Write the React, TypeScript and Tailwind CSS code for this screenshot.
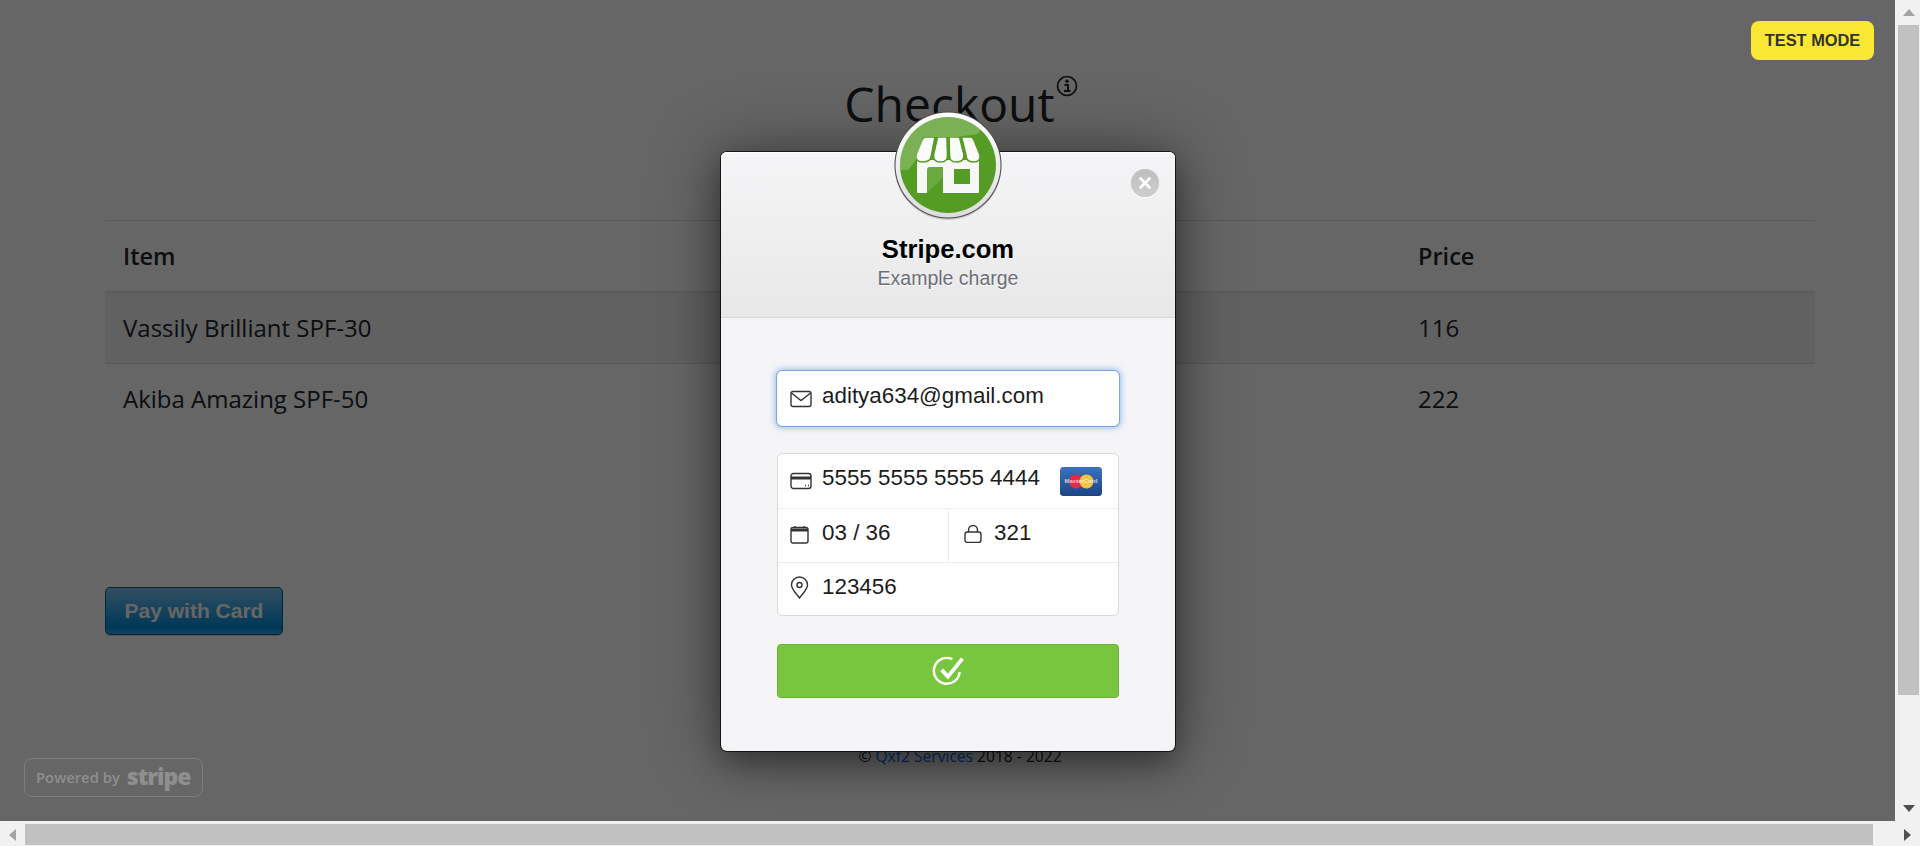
import React from "react";

const ic = "shrink-0 fill-none stroke-[#333] stroke-[1.4]";

function StoreLogo() {
  const awn = [
    "M33 27 Q30 27 29 30 L23 45 Q22 52 30 52 Q38 52 38.5 45 L42 27 Z",
    "M44.5 27 L40.5 45 Q40 52 47.5 52 Q55 52 54.5 45 L54 27 Z",
    "M56 27 L56.5 45 Q56 52 63.5 52 Q71 52 71 45 L66.5 27 Z",
    "M68.5 27 L73 45 Q73 52 80.5 52 Q88 52 87 45 L81 30 Q80 27 77 27 Z",
  ];
  return (
    <svg width="110" height="110" viewBox="0 0 110 110" className="block">
      <defs>
        <clipPath id="logoClip">
          <circle cx="55" cy="55" r="48" />
        </clipPath>
        <linearGradient id="ringG" x1="0" y1="0" x2="0" y2="1">
          <stop offset="0" stopColor="#ffffff" />
          <stop offset="1" stopColor="#dcdcdc" />
        </linearGradient>
      </defs>
      <circle cx="55" cy="56.5" r="53.5" fill="#000" opacity="0.15" />
      <circle cx="55" cy="55" r="53.5" fill="#4a4a4a" />
      <circle cx="55" cy="55" r="52.5" fill="url(#ringG)" />
      <circle cx="55" cy="55" r="48" fill="#549c24" />
      <rect x="24" y="50" width="62" height="33" rx="1" fill="#f7f7f7" />
      {awn.map((d) => (
        <path key={d} d={d} fill="#fbfbfb" stroke="#549c24" strokeWidth="1.6" />
      ))}
      <path d="M34 83 V60 Q34 57 37 57 H50 V83 Z" fill="#549c24" />
      <rect x="61" y="59" width="16" height="15" fill="#549c24" />
      <g clipPath="url(#logoClip)">
        <path d="M34 83 L50 68 V57 H37 Q34 57 34 60 Z" fill="#fff" opacity="0.13" />
        <path d="M90 0 L84 24 L64 27 H30 L26 46 L15 60 L0 60 V0 Z" fill="#fff" opacity="0.22" />
        <path d="M84 24 L110 0 H88 Z" fill="#fff" opacity="0.22" />
      </g>
    </svg>
  );
}

function MasterCard() {
  return (
    <svg width="42" height="29" viewBox="0 0 42 29" className="block shrink-0">
      <defs>
        <linearGradient id="mcG" x1="0" y1="0" x2="0" y2="1">
          <stop offset="0" stopColor="#3a73bd" />
          <stop offset="1" stopColor="#1a4485" />
        </linearGradient>
      </defs>
      <rect x="0" y="0" width="42" height="29" rx="3.5" fill="url(#mcG)" />
      <circle cx="16" cy="14.5" r="7" fill="#e8264a" />
      <circle cx="26.5" cy="14.5" r="7" fill="#f5c242" />
      <text x="21" y="16.2" textAnchor="middle" fontSize="6" fontWeight="700" fill="#ffffff" opacity="0.7" fontFamily="Liberation Sans, sans-serif">
        MasterCard
      </text>
    </svg>
  );
}

export default function App() {
  return (
    <div className="flex h-screen w-screen flex-col overflow-hidden bg-white font-['Liberation_Sans',Arial,sans-serif]">
      <div className="flex min-h-0 flex-1">
        <div className="relative min-w-0 flex-1 overflow-hidden">
          {/* Page behind the dialog */}
          <div className="w-[1920px] px-[105px] font-['Open_Sans',sans-serif] text-[#212529]">
            <h1 className="flex h-[220px] justify-center pt-[75px] text-[48px] leading-[58px] font-normal">
              <span className="ml-[2px]">Checkout</span>
              <svg width="22" height="22" viewBox="0 0 22 22" className="ml-[1px]">
                <circle cx="11" cy="11" r="9.5" fill="none" stroke="#212529" strokeWidth="1.7" />
                <circle cx="11" cy="6.2" r="1.7" fill="#212529" />
                <path d="M8.5 10 H12 V15.5 M8 16 H14.5" fill="none" stroke="#212529" strokeWidth="2" />
              </svg>
            </h1>
            <table className="w-full border-collapse text-left text-[24px]">
              <thead>
                <tr className="h-[71px] border-t border-b-2 border-t-[#dee2e6] border-b-[#dee2e6]">
                  <th className="pt-[2px] pl-[18px] text-[23.5px] font-semibold">Item</th>
                  <th className="w-[415px] pt-[2px] pl-[18px] text-[23.5px] font-semibold">Price</th>
                </tr>
              </thead>
              <tbody>
                <tr className="h-[72px] border-b border-[#dee2e6] bg-[#f2f2f2]">
                  <td className="pl-[18px]">Vassily Brilliant SPF-30</td>
                  <td className="pl-[18px]">116</td>
                </tr>
                <tr className="h-[71px]">
                  <td className="pl-[18px]">Akiba Amazing SPF-50</td>
                  <td className="pl-[18px]">222</td>
                </tr>
              </tbody>
            </table>
            <button className="mt-[152px] block h-[48px] w-[178px] rounded-[5px] border border-[#0a5a8f] bg-[linear-gradient(#7dc5ee,#008cdd_85%,#30a2e4)] font-['Liberation_Sans',sans-serif] text-[21px] font-bold text-white shadow-[0_1px_0_rgba(0,0,0,0.2)]">
              Pay with Card
            </button>
            <p className="mt-[111px] text-center text-[15.6px] leading-[20px]">
              © <span className="text-[#007bff]">Qxf2 Services</span> 2018 - 2022
            </p>
            <div className="h-[200px]" />
          </div>

          {/* Dim layer */}
          <div className="absolute inset-0 bg-black/60" />

          <div className="absolute top-[21px] left-[1751px] flex h-[39px] w-[123px] items-center justify-center rounded-[8px] bg-[#f9e733] text-[16.4px] font-bold text-[#333]">
            TEST MODE
          </div>

          <div className="absolute top-[758px] left-[24px] flex h-[39px] w-[179px] items-center gap-[7px] rounded-[8px] border border-[#7d7d7d] pl-[11px] font-['Open_Sans',sans-serif] text-[#8f8f8f]">
            <span className="text-[14.8px] leading-none font-semibold">Powered by</span>
            <span className="mb-[2px] text-[23px] leading-none font-extrabold tracking-[-1px]">stripe</span>
          </div>

          {/* Dialog */}
          <div className="absolute top-[152px] left-[721px] flex h-[599px] w-[454px] flex-col rounded-[6px] bg-[#f5f5f7] shadow-[0_0_0_1px_rgba(0,0,0,0.7),0_12px_30px_rgba(0,0,0,0.35),0_0_70px_rgba(0,0,0,0.4)]">
            <div className="flex h-[166px] shrink-0 flex-col items-center rounded-t-[6px] border-b border-[#d8d8d8] bg-[linear-gradient(#f5f5f7,#e8e8e9)] pt-[82px] shadow-[inset_0_1px_0_#fff]">
              <div className="text-[25.6px] leading-[30px] font-bold text-black [text-shadow:0_1px_0_#fff]">Stripe.com</div>
              <div className="mt-[2px] text-[19.5px] leading-[24px] text-[#6d6e78] [text-shadow:0_1px_0_#fff]">Example charge</div>
            </div>

            <div className="absolute top-[-42px] left-[172px]">
              <StoreLogo />
            </div>

            <div className="absolute top-[17px] left-[410px] flex h-[28px] w-[28px] items-center justify-center rounded-full bg-[linear-gradient(#bdbdbd,#cfcfcf)] shadow-[inset_0_0_0_1px_#c9c9c9,0_1px_0_#fff]">
              <svg width="14" height="14" viewBox="0 0 14 14">
                <path d="M2.5 2.5 L11.5 11.5 M11.5 2.5 L2.5 11.5" stroke="#fff" strokeWidth="2.8" strokeLinecap="round" />
              </svg>
            </div>

            <div className="flex flex-1 flex-col px-[56px] pt-[53px] text-[22.4px] text-[#1c1c1c]">
              <div className="flex h-[55px] items-center rounded-[5px] bg-white pl-[13px] shadow-[0_0_0_1px_#7aa7e0,0_0_6px_2px_rgba(80,140,230,0.55)]">
                <svg width="22" height="18" viewBox="0 0 22 18" className={`${ic} mt-[1px]`}>
                  <rect x="1" y="1.5" width="20" height="15" rx="2" />
                  <path d="M1.5 3 L11 10.5 L20.5 3" />
                </svg>
                <span className="ml-[10px] mb-[6px]">aditya634@gmail.com</span>
              </div>

              <div className="mt-[27px] flex h-[163px] flex-col rounded-[5px] border border-[#d9d9d9] bg-white">
                <div className="flex h-[55px] items-center border-b border-[#ececec] pl-[12px]">
                  <svg width="22" height="18" viewBox="0 0 22 18" className={`${ic} mt-[0px]`}>
                    <rect x="1" y="1.5" width="20" height="15" rx="2.5" />
                    <path d="M1 6 H21" strokeWidth="3" />
                    <path d="M15 13.5 H16 M18 13.5 H19" />
                  </svg>
                  <span className="ml-[10px] mb-[6px]">5555 5555 5555 4444</span>
                  <div className="ml-[20px] mt-[1px]">
                    <MasterCard />
                  </div>
                </div>
                <div className="flex h-[54px] border-b border-[#ececec]">
                  <div className="flex w-[171px] items-center border-r border-[#ececec] pl-[12px]">
                    <svg width="19" height="19" viewBox="0 0 19 19" className={`${ic} mt-[-2px]`}>
                      <rect x="1" y="2.5" width="17" height="15.5" rx="2" />
                      <path d="M1 5 H18" strokeWidth="3" />
                      <path d="M5 1 V3 M14 1 V3" />
                    </svg>
                    <span className="ml-[13px] mb-[6px]">03 / 36</span>
                  </div>
                  <div className="flex flex-1 items-center pl-[15px]">
                    <svg width="18" height="19" viewBox="0 0 18 19" className={`${ic} mt-[-4px]`}>
                      <rect x="1" y="8" width="16" height="10.5" rx="2.5" />
                      <path d="M4.5 8 V6 A4.5 4.5 0 0 1 13.5 6 V8" />
                    </svg>
                    <span className="ml-[12px] mb-[6px]">321</span>
                  </div>
                </div>
                <div className="flex flex-1 items-center pl-[12px]">
                  <svg width="19" height="23" viewBox="0 0 19 23" className={`${ic} mt-[-4px]`}>
                    <path d="M9.5 22 C5 16 1.5 13 1.5 9 A8 8 0 0 1 17.5 9 C17.5 13 14 16 9.5 22 Z" />
                    <circle cx="9.5" cy="9" r="2.5" />
                  </svg>
                  <span className="ml-[13px] mb-[4px]">123456</span>
                </div>
              </div>

              <div className="mt-[28px] flex h-[54px] items-center justify-center rounded-[4px] border border-[#6cb236] bg-[#78c63d]">
                <svg width="36" height="36" viewBox="0 0 32 32" fill="none" stroke="#fff" className="ml-[2px]">
                  <path d="M25.5 17 A11.5 11.5 0 1 1 19 5.5" strokeWidth="2.2" />
                  <path d="M9.5 15 L15 21 L28 5" strokeWidth="3.4" />
                </svg>
              </div>
            </div>
          </div>
        </div>

        {/* Vertical scrollbar */}
        <div className="flex w-[25px] shrink-0 flex-col items-center bg-[#f1f1f1] pl-[2px]">
          <div className="flex h-[25px] w-full shrink-0 items-center justify-center">
            <svg width="12" height="7" viewBox="0 0 12 7"><path d="M6 0 L12 7 H0 Z" fill="#a3a3a3" /></svg>
          </div>
          <div className="h-[670px] w-[21px] shrink-0 bg-[#c1c1c1]" />
          <div className="flex flex-1 items-end justify-center pb-[9px]">
            <svg width="12" height="7" viewBox="0 0 12 7"><path d="M0 0 H12 L6 7 Z" fill="#505050" /></svg>
          </div>
        </div>
      </div>

      {/* Horizontal scrollbar */}
      <div className="flex h-[25px] shrink-0 items-center bg-[#f1f1f1] pt-[2px]">
        <div className="flex h-[21px] w-[25px] shrink-0 items-center justify-center">
          <svg width="7" height="12" viewBox="0 0 7 12"><path d="M7 0 V12 L0 6 Z" fill="#a3a3a3" /></svg>
        </div>
        <div className="h-[21px] w-[1848px] shrink-0 bg-[#c1c1c1]" />
        <div className="flex h-[21px] flex-1 items-center justify-end pr-[9px]">
          <svg width="7" height="12" viewBox="0 0 7 12"><path d="M0 0 L7 6 L0 12 Z" fill="#505050" /></svg>
        </div>
      </div>
    </div>
  );
}
